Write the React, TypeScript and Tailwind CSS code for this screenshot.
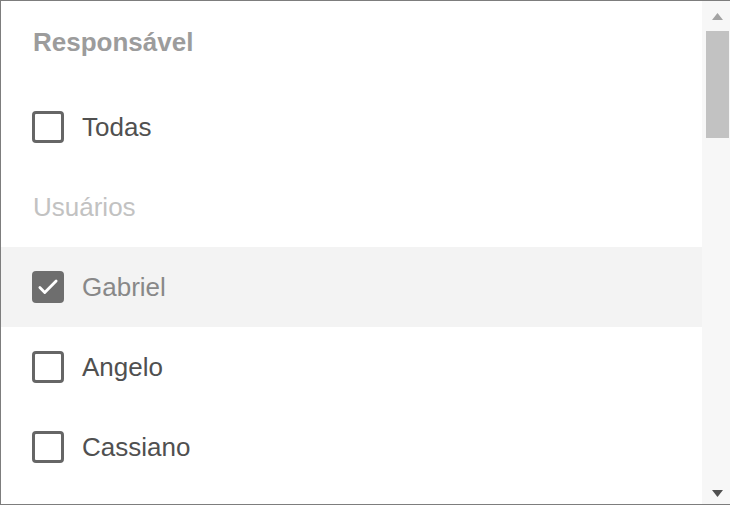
import React from "react";

function Box({ checked }: { checked?: boolean }) {
  if (checked) {
    return (
      <div className="w-[32px] h-[32px] rounded-[4px] bg-[#6e6e6e] flex items-center justify-center shrink-0">
        <svg width="26" height="26" viewBox="0 0 24 24" fill="none">
          <path d="M4.5 12.5l4.5 4.5L19.5 6.5" stroke="#ffffff" strokeWidth="2.6" strokeLinecap="round" strokeLinejoin="round" />
        </svg>
      </div>
    );
  }
  return <div className="w-[32px] h-[32px] rounded-[4px] border-[3px] border-[#666666] bg-white shrink-0" />;
}

function Row({ label, checked, color, bg }: { label: string; checked?: boolean; color: string; bg?: string }) {
  return (
    <div className={`h-[80px] flex items-center pl-[31px] gap-[18px] ${bg ?? ""}`}>
      <Box checked={checked} />
      <span className="text-[26px]" style={{ color }}>{label}</span>
    </div>
  );
}

export default function App() {
  return (
    <div
      className="w-[730px] h-[505px] bg-white border-l border-t border-b border-[#7d7d7d] flex overflow-hidden"
      style={{ fontFamily: '"Liberation Sans", Arial, sans-serif' }}
    >
      <div className="flex-1 flex flex-col">
        <div className="h-[86px] flex items-center pl-[32px] pb-[4px]">
          <span className="text-[26px] font-bold text-[#9c9c9c]">Responsável</span>
        </div>
        <Row label="Todas" color="#505050" />
        <div className="h-[80px] flex items-center pl-[32px]">
          <span className="text-[26px] text-[#c2c2c2]">Usuários</span>
        </div>
        <Row label="Gabriel" checked color="#888888" bg="bg-[#f3f3f3]" />
        <Row label="Angelo" color="#505050" />
        <Row label="Cassiano" color="#505050" />
      </div>
      <div className="w-[28px] bg-[#f7f7f7] flex flex-col items-end">
        <div className="h-[30px] w-full flex items-center justify-center pl-[3px]">
          <svg width="11" height="7" viewBox="0 0 11 7"><path d="M5.5 0L11 7H0z" fill="#a3a3a3" /></svg>
        </div>
        <div className="w-[23px] h-[107px] bg-[#c2c2c2] mr-[1px]" />
        <div className="flex-1" />
        <div className="h-[22px] w-full flex items-center justify-center pl-[3px]">
          <svg width="11" height="7" viewBox="0 0 11 7"><path d="M0 0H11L5.5 7z" fill="#505050" /></svg>
        </div>
      </div>
    </div>
  );
}
